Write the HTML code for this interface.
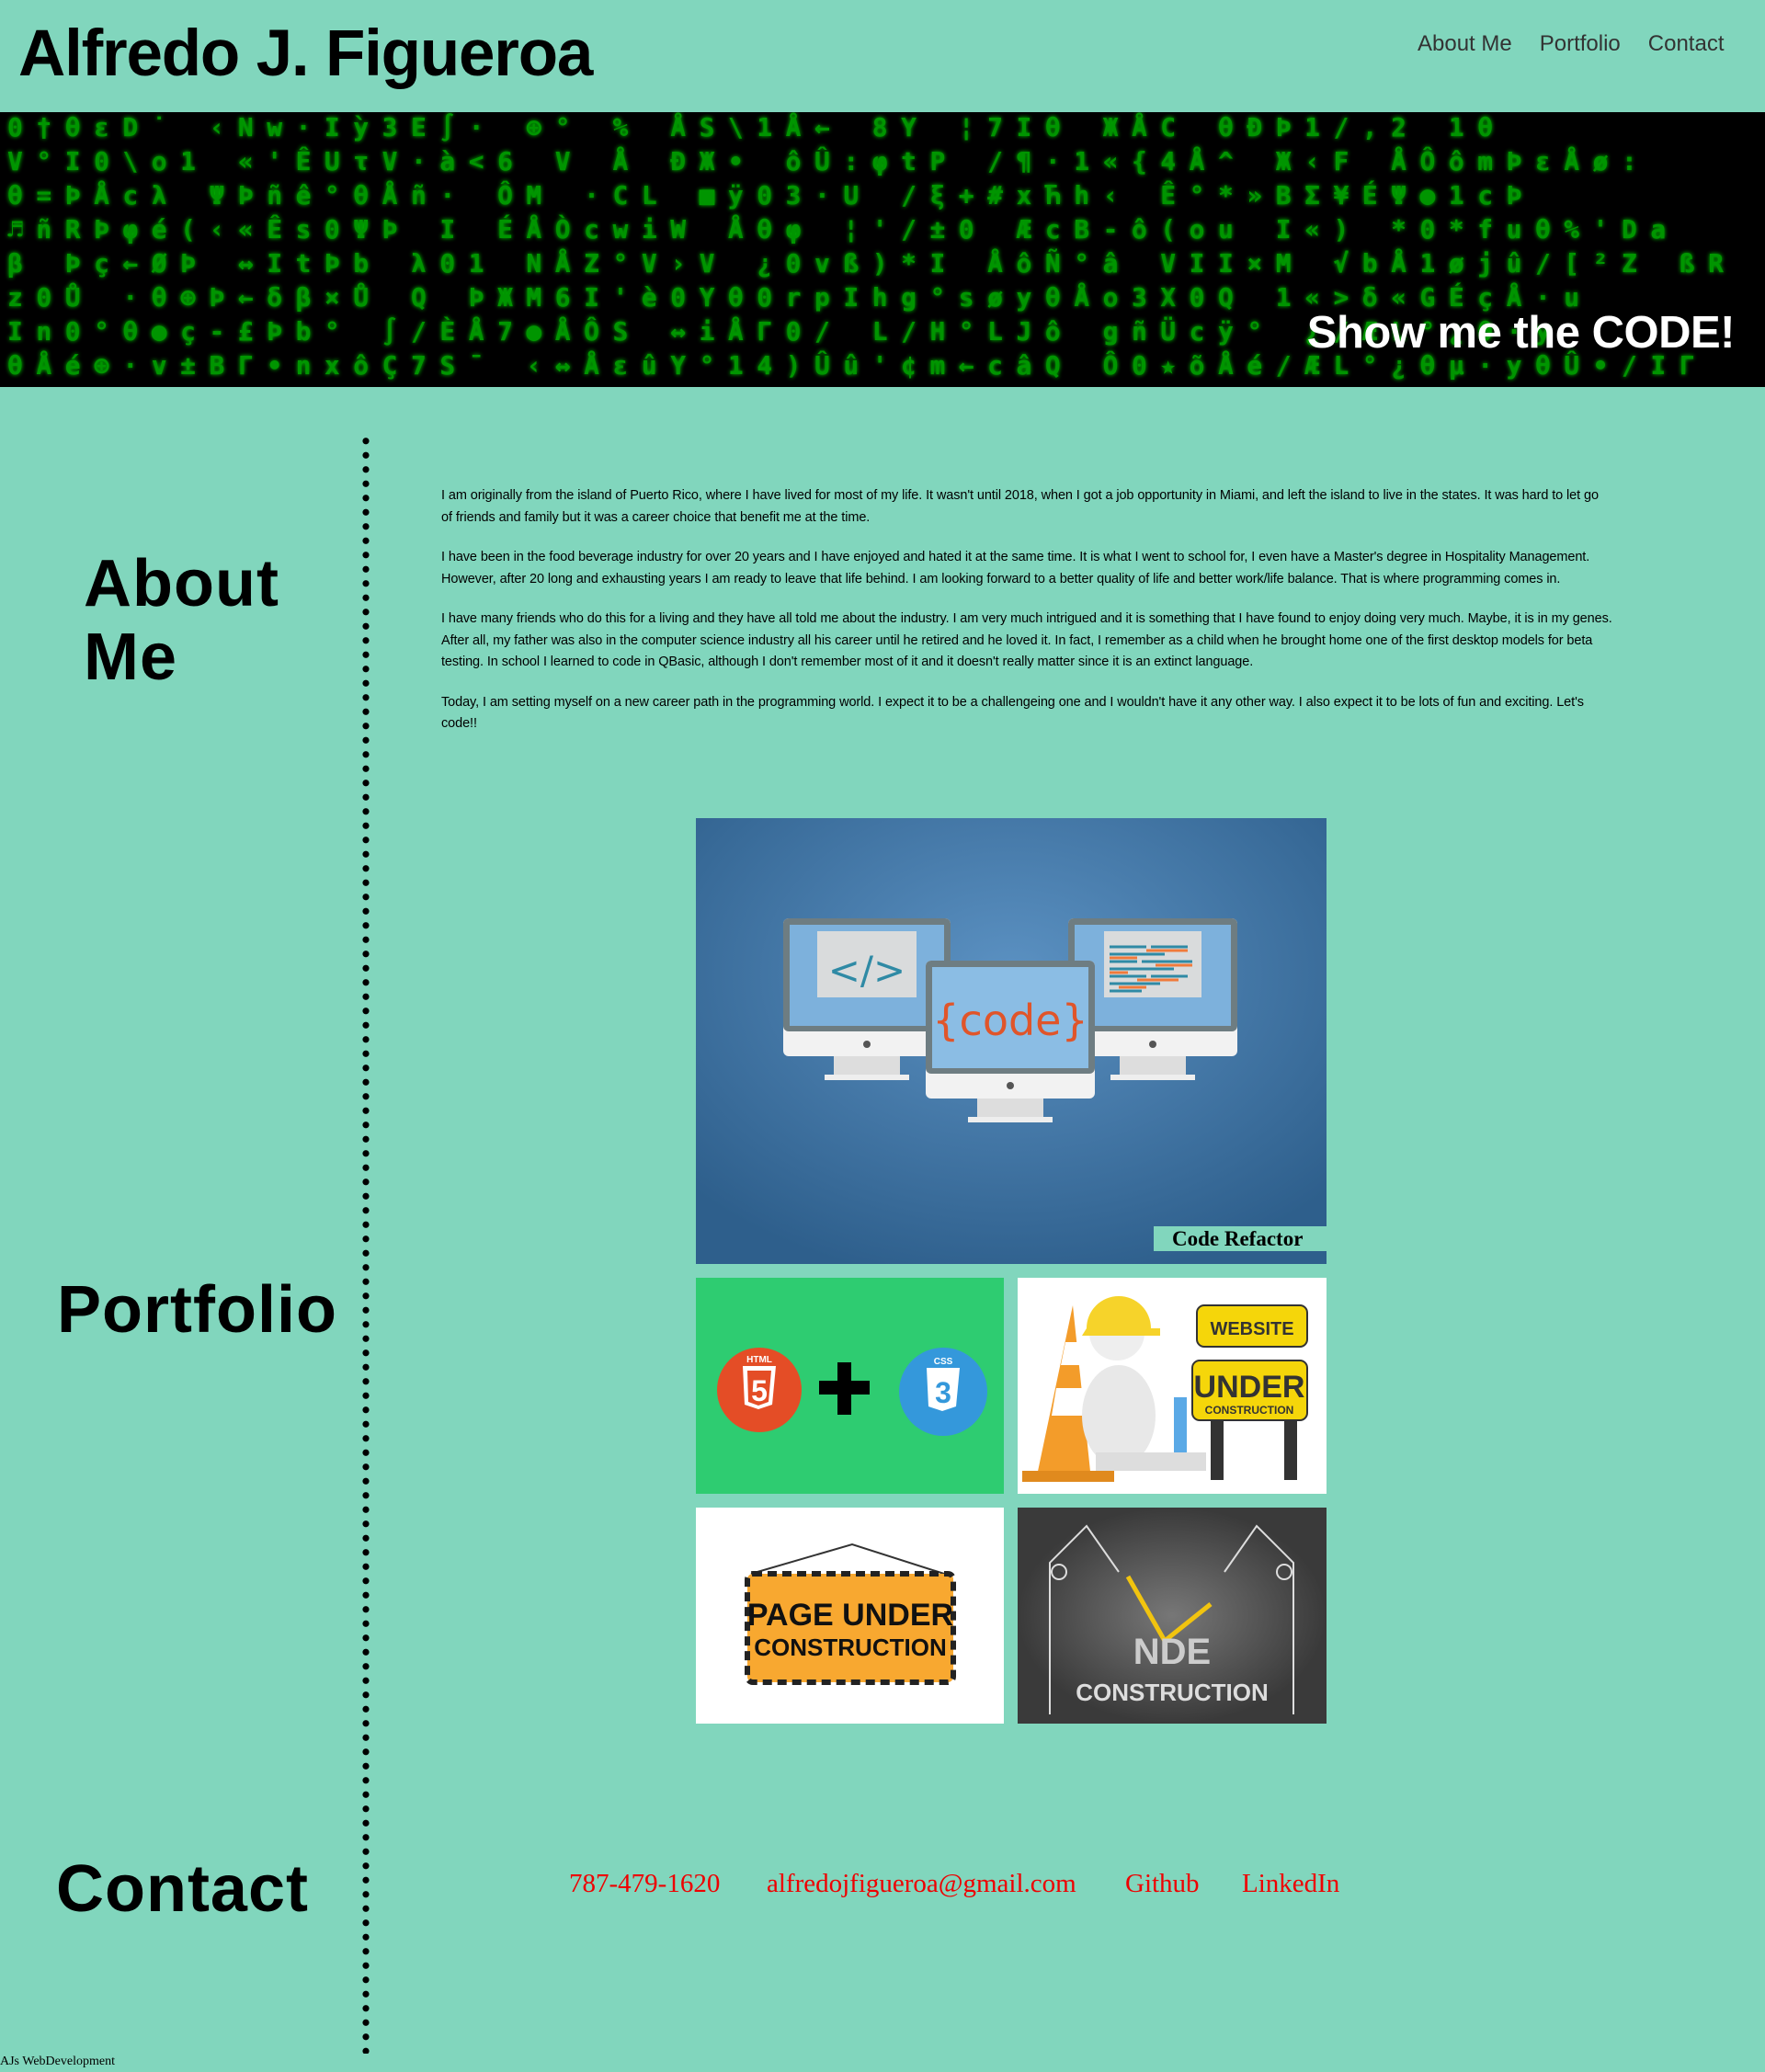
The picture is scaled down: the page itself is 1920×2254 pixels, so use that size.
<!DOCTYPE html>
<html><head><meta charset="utf-8"><style>
*{margin:0;padding:0;box-sizing:border-box}
body{width:1920px;height:2254px;background:#81d6bd;font-family:"Liberation Sans",sans-serif;position:relative;overflow:hidden;color:#000}
.abs{position:absolute}
h1{position:absolute;left:20px;top:18px;font-size:71px;font-weight:bold;letter-spacing:-1.2px;white-space:nowrap}
nav{position:absolute;top:34px;left:1542px;font-size:24px;color:#333;white-space:nowrap}
nav span{margin-right:30px}
.banner{position:absolute;left:0;top:122px;width:1920px;height:299px;background:#000;overflow:hidden}
.mx{position:absolute;left:8px;font-family:"DejaVu Sans Mono",monospace;font-size:28px;font-weight:bold;color:#0b0;letter-spacing:14.5px;white-space:nowrap;text-shadow:0 0 5px #0f0;opacity:.8}
.show{position:absolute;right:33px;top:212px;font-size:49px;font-weight:bold;color:#fff;white-space:nowrap;letter-spacing:-0.5px}
.dots{position:absolute;left:394px;top:472px;width:8px;height:1762px;background-image:radial-gradient(circle,#000 3.3px,transparent 3.8px);background-size:8px 15.5px}
.hd{position:absolute;font-weight:bold;font-size:72px;line-height:80px;white-space:nowrap;letter-spacing:1px}
.p{position:absolute;left:480px;top:528px;font-size:14.5px;line-height:23.5px;white-space:nowrap;letter-spacing:-0.1px}
.p div{margin-bottom:20px}
.links{position:absolute;top:2033px;font-family:"Liberation Serif",serif;font-size:29px;color:#e00;white-space:nowrap}
</style></head><body>
<h1>Alfredo J. Figueroa</h1>
<nav><span>About Me</span><span>Portfolio</span><span style="margin:0">Contact</span></nav>
<div class="banner">
<div class="mx" style="top:0px">0†θεD˙ ‹Nw·Iỳ3E∫· ⊕°  % ÅS\1Å← 8Y  ¦7Iθ ЖÅC θÐÞ1/,2 1θ</div>
<div class="mx" style="top:37px">V°I0\o1 «'ÊUτV·à<6 V Å ÐЖ• ôÛ:φtP /¶·1«{4Å^ Ж‹F ÅÔômÞεÅø:</div>
<div class="mx" style="top:74px">θ=ÞÅcλ ΨÞñê°θÅñ· ÔM ·CL ■ÿ03·U /ξ+#xЋh‹ Ê°*»BΣ¥ÉΨ●1cÞ</div>
<div class="mx" style="top:111px">♬ñRÞφé(‹«Ês0ΨÞ I ÉÅÒcwiW Åθφ ¦'/±0 ÆcB-ô(ou I«) *0*fuθ%'Da</div>
<div class="mx" style="top:148px">β Þç←ØÞ ↔ItÞb λ01 NÅZ°V›V ¿0vß)*I ÅôÑ°â VII×M √bÅ1øjû/[²Z ßR</div>
<div class="mx" style="top:185px">z0Ů ·θ⊕Þ←δβ×Ů Q ÞЖM6I'è0Yθ0rpIhg°søyθÅo3X0Q  1«>δ«GÉçÅ·u</div>
<div class="mx" style="top:222px">In0°θ●ç-£Þb° ∫/ÈÅ7●ÅÔS ↔iÅΓ0/ L/H°LJô gñÜcÿ° ¿/ÆL°¿θ·y</div>
<div class="mx" style="top:259px">θÅé⊕·v±BΓ•nxôÇ7S¯ ‹↔ÅεûY°14)Ûû'¢m←câQ Ô0★õÅé/ÆL°¿θμ·yθÛ•/IΓ</div>
<div class="show">Show me the CODE!</div>
</div>
<div class="dots"></div>
<div class="hd" style="left:91px;top:595px">About<br>Me</div>
<div class="hd" style="left:62px;top:1385px">Portfolio</div>
<div class="hd" style="left:61px;top:2015px">Contact</div>
<div class="p">
<div>I am originally from the island of Puerto Rico, where I have lived for most of my life. It wasn't until 2018, when I got a job opportunity in Miami, and left the island to live in the states. It was hard to let go<br>of friends and family but it was a career choice that benefit me at the time.</div>
<div>I have been in the food beverage industry for over 20 years and I have enjoyed and hated it at the same time. It is what I went to school for, I even have a Master's degree in Hospitality Management.<br>However, after 20 long and exhausting years I am ready to leave that life behind. I am looking forward to a better quality of life and better work/life balance. That is where programming comes in.</div>
<div>I have many friends who do this for a living and they have all told me about the industry. I am very much intrigued and it is something that I have found to enjoy doing very much. Maybe, it is in my genes.<br>After all, my father was also in the computer science industry all his career until he retired and he loved it. In fact, I remember as a child when he brought home one of the first desktop models for beta<br>testing. In school I learned to code in QBasic, although I don't remember most of it and it doesn't really matter since it is an extinct language.</div>
<div>Today, I am setting myself on a new career path in the programming world. I expect it to be a challengeing one and I wouldn't have it any other way. I also expect it to be lots of fun and exciting. Let's<br>code!!</div>
</div>

<svg class="abs" style="left:757px;top:890px" width="686" height="485" viewBox="0 0 686 485">
<defs><radialGradient id="bg" cx="50%" cy="35%" r="70%"><stop offset="0" stop-color="#5b91c2"/><stop offset="1" stop-color="#2e5f8c"/></radialGradient></defs>
<rect width="686" height="485" fill="url(#bg)"/>
<g>
<rect x="95" y="109" width="182" height="150" rx="6" fill="#f2f2f2"/><rect x="95" y="109" width="182" height="123" rx="6" fill="#6e7d82"/><rect x="102" y="116" width="168" height="110" fill="#7db1dc"/>
<rect x="132" y="123" width="108" height="72" fill="#d9dbdc"/><text x="186" y="180" text-anchor="middle" font-size="42" fill="#2f8aa5" font-family="DejaVu Sans">&lt;/&gt;</text>
<circle cx="186" cy="246" r="4" fill="#555"/><rect x="150" y="259" width="72" height="20" fill="#ddd"/><rect x="140" y="279" width="92" height="6" fill="#eee"/>
</g>
<g>
<rect x="405" y="109" width="184" height="150" rx="6" fill="#f2f2f2"/><rect x="405" y="109" width="184" height="123" rx="6" fill="#6e7d82"/><rect x="412" y="116" width="170" height="110" fill="#7db1dc"/>
<rect x="444" y="123" width="106" height="72" fill="#d9dbdc"/>
<g stroke-width="3"><path d="M450 140h40M495 140h40M450 148h60M450 156h30M485 156h55M450 164h70M450 172h40M495 172h40M450 180h55M450 188h35" stroke="#2f8aa5"/><path d="M490 144h45M450 152h30M500 160h40M450 168h20M480 176h45M460 184h30" stroke="#f07a3a"/></g>
<circle cx="497" cy="246" r="4" fill="#555"/><rect x="461" y="259" width="72" height="20" fill="#ddd"/><rect x="451" y="279" width="92" height="6" fill="#eee"/>
</g>
<g>
<rect x="250" y="155" width="184" height="150" rx="6" fill="#f2f2f2"/><rect x="250" y="155" width="184" height="123" rx="6" fill="#6e7d82"/><rect x="257" y="162" width="170" height="110" fill="#8bbde4"/>
<text x="342" y="236" text-anchor="middle" font-size="46" fill="#e0552a" font-family="DejaVu Sans">{code}</text>
<circle cx="342" cy="291" r="4" fill="#555"/><rect x="306" y="305" width="72" height="20" fill="#ddd"/><rect x="296" y="325" width="92" height="6" fill="#eee"/>
</g>
<rect x="498" y="444" width="188" height="27" fill="#81d6bd"/>
<text x="518" y="465" font-family="Liberation Serif" font-weight="bold" font-size="23" fill="#000">Code Refactor</text>
</svg>

<svg class="abs" style="left:757px;top:1390px" width="335" height="235" viewBox="0 0 335 235">
<rect width="335" height="235" fill="#2ecc71"/>
<circle cx="69" cy="122" r="46" fill="#e44d26"/><path d="M51 96h36l-4 42-15 5-15-5z" fill="#fff"/><path d="M56 101h26l-3 34-11 4-11-4z" fill="#e44d26"/><text x="69" y="134" text-anchor="middle" font-size="32" font-weight="bold" fill="#fff">5</text><text x="69" y="92" text-anchor="middle" font-size="10" font-weight="bold" fill="#fff">HTML</text>
<path d="M134 112h20v-20h15v20h20v15h-20v22h-15v-22h-20z" fill="#000"/>
<circle cx="269" cy="124" r="48" fill="#3498db"/><path d="M251 98h36l-4 42-15 5-15-5z" fill="#fff"/><text x="269" y="136" text-anchor="middle" font-size="32" font-weight="bold" fill="#3498db">3</text><text x="269" y="94" text-anchor="middle" font-size="10" font-weight="bold" fill="#fff">CSS</text>
</svg>

<svg class="abs" style="left:1107px;top:1390px" width="336" height="235" viewBox="0 0 336 235">
<rect width="336" height="235" fill="#fff"/>
<path d="M60 30l-40 190h60z" fill="#f39c2a"/><path d="M52 70h18l5 25h-28zM42 120h38l5 30h-48z" fill="#fff"/><rect x="5" y="210" width="100" height="12" fill="#e08a1e"/>
<ellipse cx="110" cy="150" rx="40" ry="55" fill="#e8e8e8"/><circle cx="108" cy="60" r="30" fill="#eee"/><path d="M75 55a35 35 0 0 1 70 0h10v8h-85z" fill="#f6d32a"/>
<rect x="85" y="190" width="120" height="20" fill="#ddd"/><rect x="170" y="130" width="14" height="60" fill="#5aa9e6"/>
<rect x="195" y="30" width="120" height="45" rx="8" fill="#f5d60a" stroke="#333" stroke-width="2"/><text x="255" y="62" text-anchor="middle" font-size="20" font-weight="bold" fill="#333">WEBSITE</text>
<rect x="190" y="90" width="125" height="65" rx="8" fill="#f5d60a" stroke="#333" stroke-width="2"/><text x="252" y="130" text-anchor="middle" font-size="34" font-weight="bold" fill="#333">UNDER</text><text x="252" y="148" text-anchor="middle" font-size="12" font-weight="bold" fill="#333">CONSTRUCTION</text>
<rect x="210" y="155" width="14" height="65" fill="#333"/><rect x="290" y="155" width="14" height="65" fill="#333"/>
</svg>

<svg class="abs" style="left:757px;top:1640px" width="335" height="235" viewBox="0 0 335 235">
<rect width="335" height="235" fill="#fff"/>
<path d="M60 72L170 40 270 72" stroke="#333" stroke-width="2" fill="none"/>
<rect x="56" y="72" width="224" height="118" rx="6" fill="#f8a830" stroke="#222" stroke-width="6" stroke-dasharray="10 6"/>
<text x="168" y="128" text-anchor="middle" font-size="34" font-weight="bold" fill="#111">PAGE UNDER</text>
<text x="168" y="161" text-anchor="middle" font-size="26" font-weight="bold" fill="#111">CONSTRUCTION</text>
</svg>

<svg class="abs" style="left:1107px;top:1640px" width="336" height="235" viewBox="0 0 336 235">
<defs><radialGradient id="g2"><stop offset="0" stop-color="#777"/><stop offset="1" stop-color="#3a3a3a"/></radialGradient></defs>
<rect width="336" height="235" fill="url(#g2)"/>
<g stroke="#ddd" stroke-width="2" fill="none"><path d="M35 225V60l40-40 35 50M300 225V60l-40-40-35 50"/><circle cx="45" cy="70" r="8"/><circle cx="290" cy="70" r="8"/></g>
<path d="M120 75l40 70 50-40" stroke="#f1c40f" stroke-width="5" fill="none"/>
<text x="168" y="170" text-anchor="middle" font-size="40" font-weight="bold" fill="#ccc">NDE</text>
<text x="168" y="210" text-anchor="middle" font-size="26" font-weight="bold" fill="#ddd">CONSTRUCTION</text>
</svg>

<div class="links" style="left:619px">787-479-1620</div>
<div class="links" style="left:834px">alfredojfigueroa@gmail.com</div>
<div class="links" style="left:1224px">Github</div>
<div class="links" style="left:1351px">LinkedIn</div>
<div class="abs" style="left:0;top:2235px;font-family:'Liberation Serif',serif;font-size:14px;white-space:nowrap">AJs WebDevelopment</div>
</body></html>
